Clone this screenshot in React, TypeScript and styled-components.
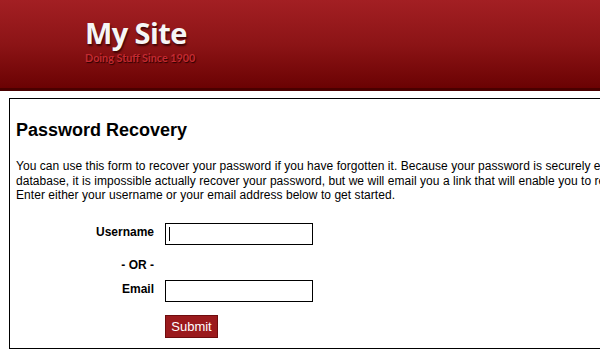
import React from 'react';
import styled, { createGlobalStyle } from 'styled-components';

const GlobalStyle = createGlobalStyle`
  html, body {
    margin: 0;
    padding: 0;
    background: #ffffff;
    overflow: hidden;
  }
  body {
    font-family: "Liberation Sans", Arial, sans-serif;
    color: #000;
  }
`;

const Header = styled.header`
  height: 91px;
  box-sizing: border-box;
  background: linear-gradient(to bottom, #a31f23 0%, #8c1416 50%, #6b0203 100%);
  border-bottom: 3px solid #4a0000;
  padding: 14px 0 0 85px;
`;

const SiteTitle = styled.h1`
  margin: 0;
  font-family: "Open Sans", "Lato", sans-serif;
  font-weight: 700;
  font-size: 29px;
  line-height: 38px;
  letter-spacing: -0.6px;
  color: #f6f6f6;
  text-shadow: 1px 2px 2px rgba(40, 0, 0, 0.8);
`;

const Tagline = styled.div`
  font-family: "Lato", "Open Sans", sans-serif;
  font-weight: 700;
  font-size: 10.8px;
  line-height: 13px;
  margin-top: -1px;
  color: #c42a30;
  text-shadow: 1px 1px 1px rgba(30, 0, 0, 0.9);
`;

const Content = styled.main`
  margin: 7px 0 0 9px;
  width: 940px;
  height: 251px;
  box-sizing: border-box;
  border: 1px solid #000;
  padding: 20px 6px 0 6px;
`;

const Heading = styled.h2`
  margin: 0 0 18px 0;
  font-size: 18px;
  line-height: 22px;
  font-weight: 700;
`;

const Intro = styled.p`
  margin: 0 0 20px 0;
  font-size: 12px;
  line-height: 14.5px;
  letter-spacing: 0.05px;
`;

const Form = styled.form`
  display: flex;
  flex-direction: column;
`;

const Row = styled.div<{ $gap?: number }>`
  display: flex;
  align-items: flex-start;
  gap: 11px;
  margin-top: ${({ $gap }) => $gap ?? 0}px;
`;

const Label = styled.label<{ $pad?: number }>`
  width: 138px;
  flex: none;
  text-align: right;
  font-size: 12px;
  line-height: 14px;
  font-weight: 700;
  padding-top: ${({ $pad }) => $pad ?? 2}px;
`;

const Field = styled.div`
  position: relative;
  width: 148px;
  height: 22px;
`;

const Input = styled.input`
  display: block;
  width: 148px;
  height: 22px;
  box-sizing: border-box;
  border: 1px solid #000;
  padding: 2px 4px;
  font-family: inherit;
  font-size: 12px;
  outline: none;
`;

const Caret = styled.span`
  position: absolute;
  left: 4px;
  top: 4px;
  width: 1px;
  height: 14px;
  background: #000;
`;

const SubmitButton = styled.button`
  margin-left: 149px;
  width: 53px;
  height: 23px;
  padding: 0;
  background: #9b1a1d;
  border: 1px solid #6e0c0e;
  color: #fff;
  font-family: inherit;
  font-size: 13px;
  cursor: pointer;
`;

export default function App() {
  return (
    <>
      <GlobalStyle />
      <Header>
        <SiteTitle>My Site</SiteTitle>
        <Tagline>Doing Stuff Since 1900</Tagline>
      </Header>
      <Content>
        <Heading>Password Recovery</Heading>
        <Intro>
          You can use this form to recover your password if you have forgotten it. Because your password is securely encrypted in our
          <br />
          database, it is impossible actually recover your password, but we will email you a link that will enable you to reset your password.
          <br />
          Enter either your username or your email address below to get started.
        </Intro>
        <Form onSubmit={(e) => e.preventDefault()}>
          <Row>
            <Label htmlFor="username">Username</Label>
            <Field>
              <Input id="username" type="text" />
              <Caret />
            </Field>
          </Row>
          <Row $gap={13}>
            <Label as="div" $pad={0}>- OR -</Label>
          </Row>
          <Row $gap={8}>
            <Label htmlFor="email">Email</Label>
            <Field>
              <Input id="email" type="text" />
            </Field>
          </Row>
          <Row $gap={13}>
            <SubmitButton type="submit">Submit</SubmitButton>
          </Row>
        </Form>
      </Content>
    </>
  );
}
